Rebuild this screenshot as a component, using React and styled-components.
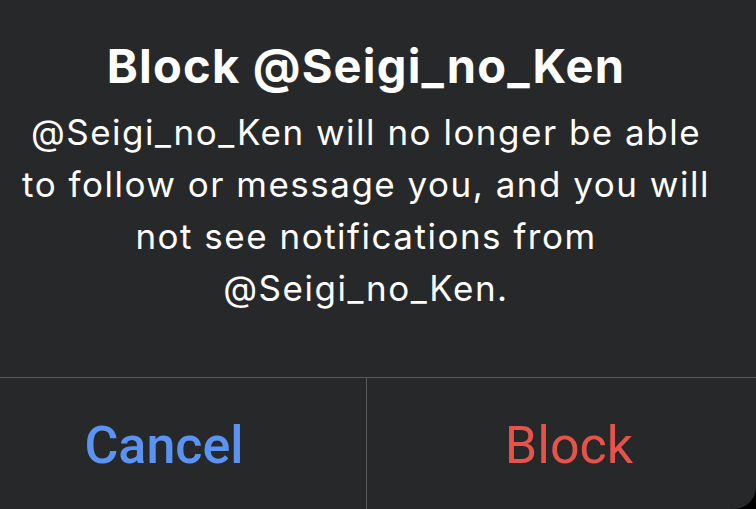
import React from "react";
import styled, { createGlobalStyle } from "styled-components";

const Global = createGlobalStyle`
  html, body {
    margin: 0;
    padding: 0;
    background: #000;
  }
  #root {
    width: 756px;
    height: 509px;
  }
`;

const Alert = styled.div`
  width: 756px;
  height: 509px;
  background-color: #27282a;
  border-bottom-right-radius: 22px;
  display: flex;
  flex-direction: column;
  font-family: Inter, Roboto, "Liberation Sans", sans-serif;
  color: #fff;
  overflow: hidden;
`;

const Content = styled.div`
  height: 377px;
  box-sizing: border-box;
  padding: 38px 24px 0 0;
  display: flex;
  flex-direction: column;
  align-items: center;
  text-align: center;
`;

const Title = styled.h1`
  margin: 0;
  font-size: 47px;
  font-weight: 700;
  line-height: 56px;
  letter-spacing: 1.2px;
  white-space: nowrap;
`;

const Message = styled.p`
  margin: 12px 0 0;
  font-size: 35px;
  font-weight: 400;
  line-height: 52px;
  letter-spacing: 1.5px;
  white-space: nowrap;
`;

const Actions = styled.div`
  flex: 1;
  display: grid;
  grid-template-columns: 366px 1fr;
  border-top: 1px solid #58595b;
`;

const Action = styled.button`
  border: none;
  background: transparent;
  font-family: Roboto, "Liberation Sans", sans-serif;
  font-size: 52px;
  font-weight: ${(p) => (p.$bold ? 500 : 400)};
  color: ${(p) => p.$color};
  padding: 4px ${(p) => p.$padRight || 0}px 0 ${(p) => p.$padLeft || 0}px;
  border-left: ${(p) => (p.$divider ? "1px solid #58595b" : "none")};
  cursor: pointer;
`;

export default function App() {
  return (
    <>
      <Global />
      <Alert>
        <Content>
          <Title>Block @Seigi_no_Ken</Title>
          <Message>
            @Seigi_no_Ken will no longer be able
            <br />
            to follow or message you, and you will
            <br />
            not see notifications from
            <br />
            @Seigi_no_Ken.
          </Message>
        </Content>
        <Actions>
          <Action $color="#5b93f2" $bold $padRight={38}>
            Cancel
          </Action>
          <Action $color="#e5534b" $divider $padLeft={15}>
            Block
          </Action>
        </Actions>
      </Alert>
    </>
  );
}
